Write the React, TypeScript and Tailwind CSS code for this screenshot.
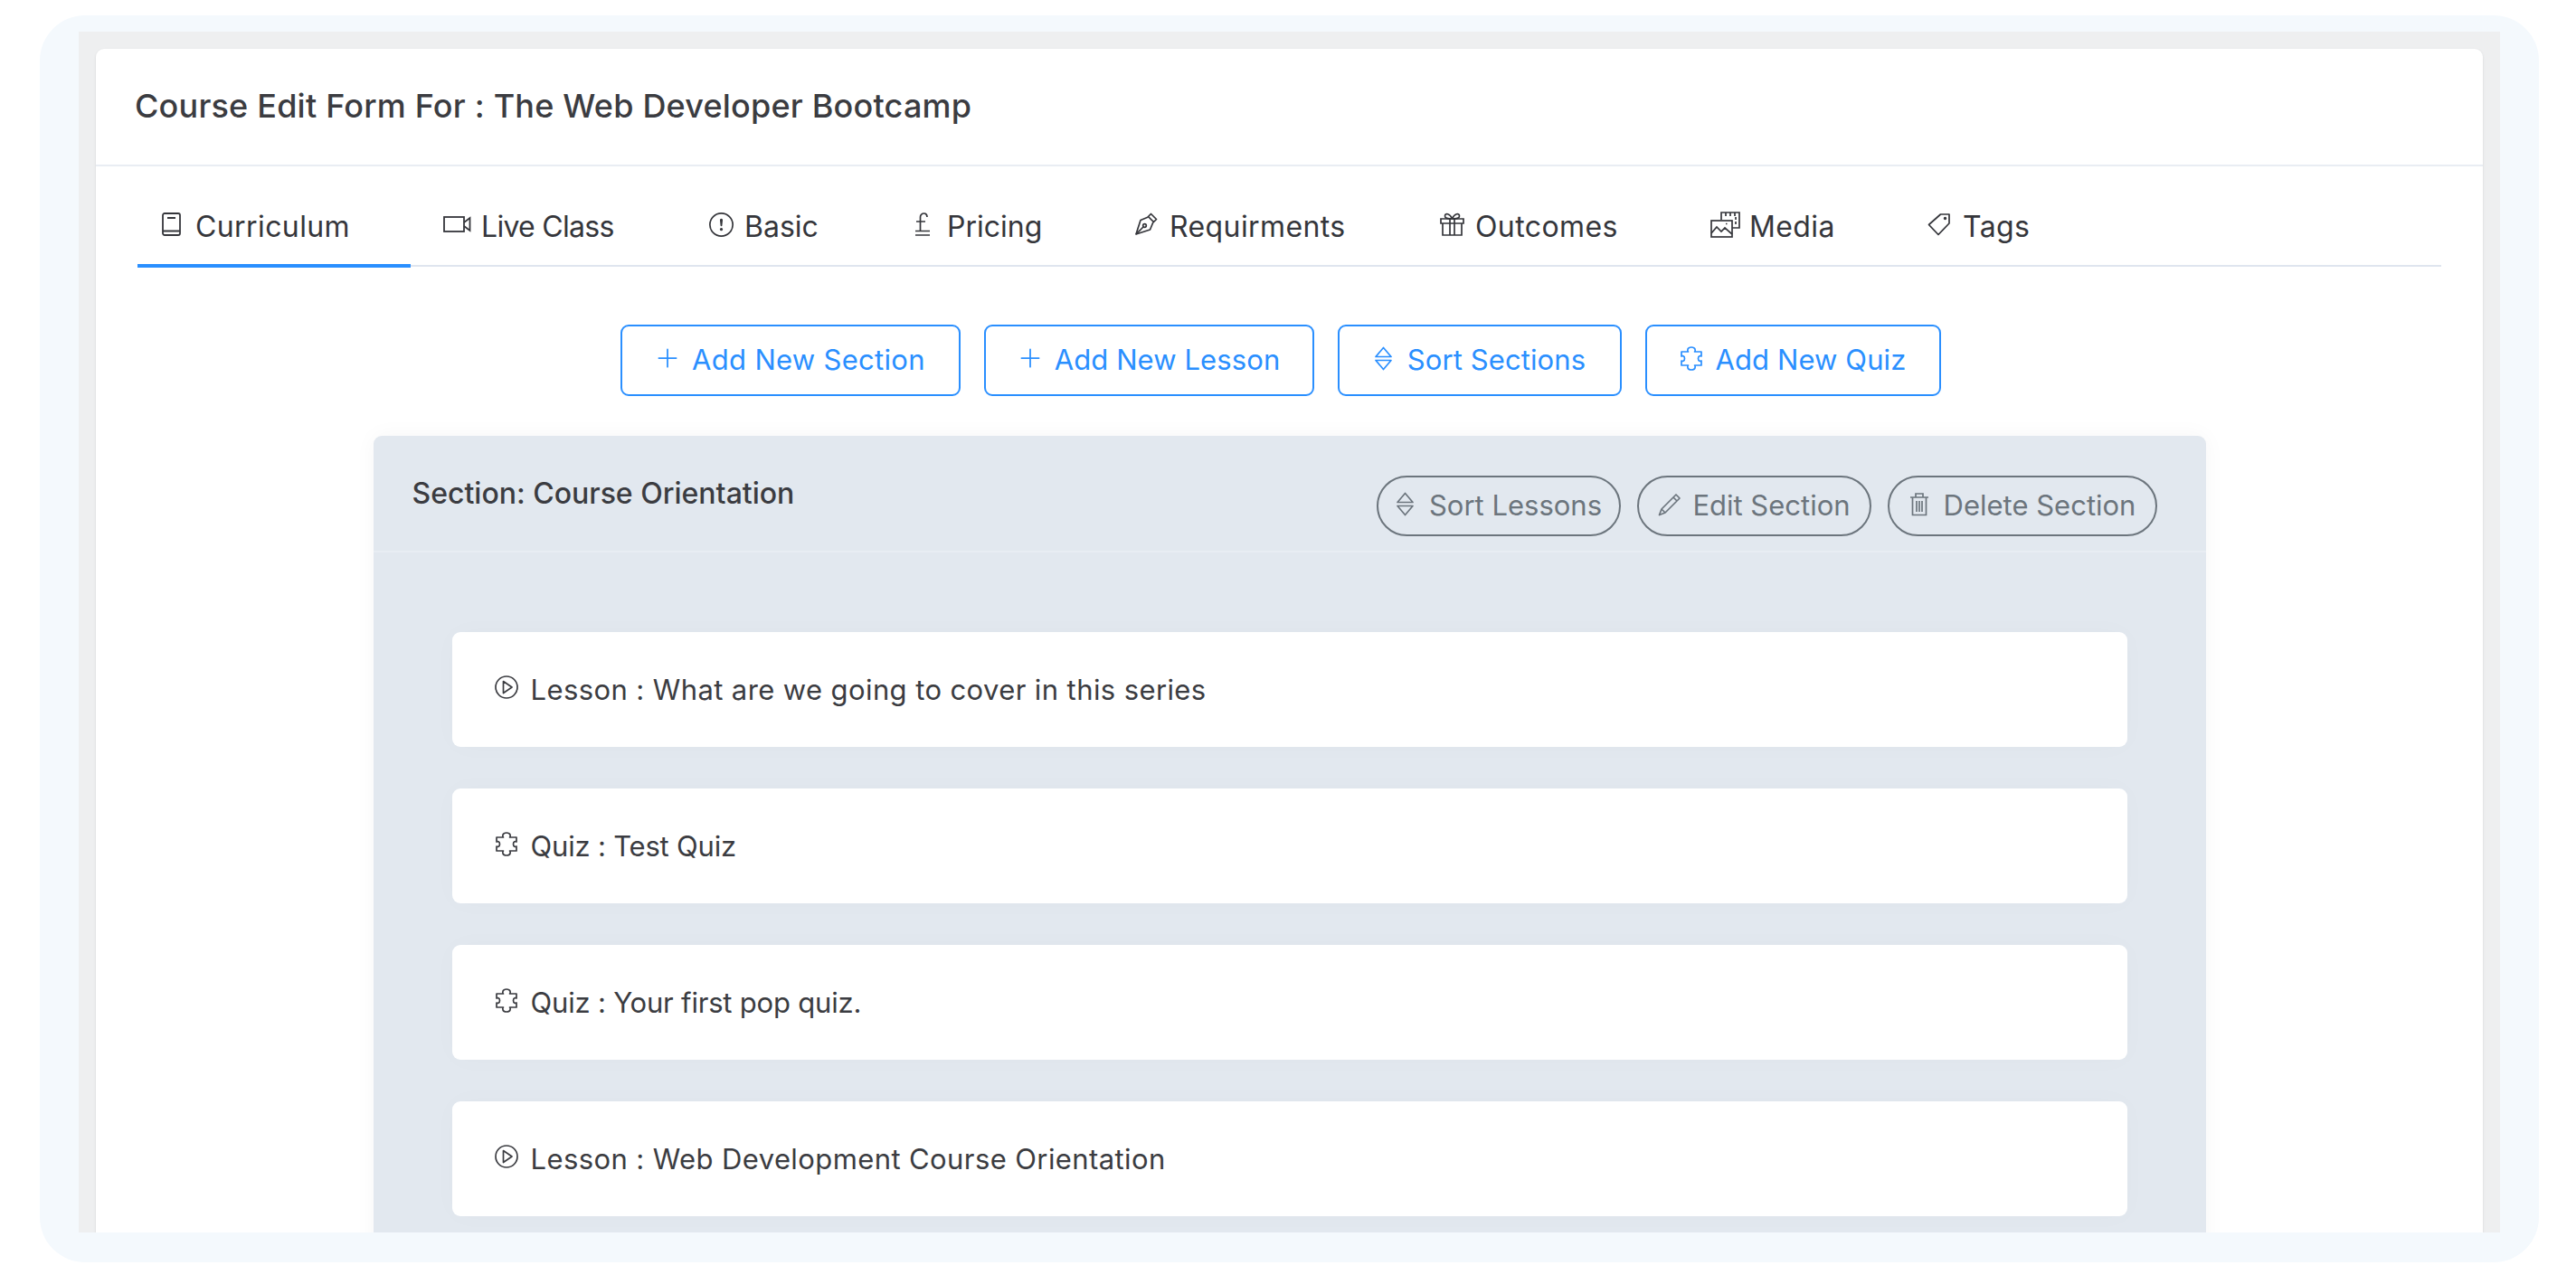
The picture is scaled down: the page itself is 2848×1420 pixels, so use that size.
import React from "react";
import { BsExclamationCircle, BsPlusLg } from "react-icons/bs";

type IconProps = { className?: string };

const BookIcon = ({ className }: IconProps) => (
  <svg viewBox="0 0 21 26" fill="none" stroke="currentColor" strokeWidth="1.8" className={className}>
    <rect x="1" y="1" width="19" height="24" rx="2" />
    <path d="M1 20.500h19M6 6h9" />
  </svg>
);

const VideoIcon = ({ className }: IconProps) => (
  <svg viewBox="0 0 31 18" fill="none" stroke="currentColor" strokeWidth="1.8" className={className}>
    <rect x="1" y="1" width="22" height="16" />
    <path d="M23 7l6.500-5v14L23 11" />
  </svg>
);

const PoundIcon = ({ className }: IconProps) => (
  <svg viewBox="0 0 18 26" fill="none" stroke="currentColor" strokeWidth="1.7" className={className}>
    <path d="M14 5c0-2.500-1.500-4-3.500-4S6.500 2.500 6.500 5v15.500M2 10h10M1 20.500h16M1 25h16" />
  </svg>
);

const SortIcon = ({ className }: IconProps) => (
  <svg viewBox="0 0 23 27" fill="none" stroke="currentColor" strokeWidth="1.7" className={className}>
    <path d="M11.500 1.500L20 11.500H3zM11.500 25.500L3 15.500h17z" strokeLinejoin="round" />
  </svg>
);

const PenIcon = ({ className }: IconProps) => (
  <svg viewBox="0 0 26 26" fill="none" stroke="currentColor" strokeWidth="1.7" strokeLinejoin="round" className={className}>
    <path d="M18.500 1.500l6 6-3 3-6-6z" />
    <path d="M15.500 5L7 8.500 2 24l15.500-5L21 10.500" />
    <path d="M2 24l8-8" />
    <circle cx="11.500" cy="14.500" r="1.800" />
  </svg>
);

const GiftIcon = ({ className }: IconProps) => (
  <svg viewBox="0 0 27 26" fill="none" stroke="currentColor" strokeWidth="1.7" className={className}>
    <path d="M1 7h25v5H1zM3 12h21v13H3zM11 7v18M16 7v18" />
    <path d="M13.500 7C11 1 5.500 0 5.500 4c0 2.500 3 3 8 3zM13.500 7C16 1 21.500 0 21.500 4c0 2.500-3 3-8 3z" />
  </svg>
);

const MediaIcon = ({ className }: IconProps) => (
  <svg viewBox="0 0 33 29" fill="none" stroke="currentColor" strokeWidth="1.7" className={className}>
    <path d="M12 9V1h20v17h-8M17 1v4M22 1v4M27 1v4M28 6v3M28 11v3" />
    <rect x="1" y="10" width="23" height="18" />
    <path d="M1 24l6-7 5 5 4-4 8 7M17 13.500h1.500" />
  </svg>
);

const TagIcon = ({ className }: IconProps) => (
  <svg viewBox="0 0 26 26" fill="none" stroke="currentColor" strokeWidth="1.7" strokeLinejoin="round" className={className}>
    <path d="M14.500 2H24v10L12 24.500 1.500 13.500z" />
    <circle cx="19.500" cy="6.500" r="0.900" />
  </svg>
);

const PuzzleIcon = ({ className }: IconProps) => (
  <svg viewBox="0 0 26 27" fill="none" stroke="currentColor" strokeWidth="1.7" strokeLinejoin="round" className={className}>
    <path d="M2 6h7.500c-1-1-1.500-5 3.500-5s4.500 4 3.500 5H24v5c-1-.8-3.500-.5-3.500 2.500s2.500 3.300 3.500 2.500v5h-7.500c1 1 1.500 5-3.500 5s-4.500-4-3.500-5H2v-5c1 .8 3.500.5 3.500-2.500S3 10.200 2 11z" />
  </svg>
);

const PlayCircleIcon = ({ className }: IconProps) => (
  <svg viewBox="0 0 26 26" fill="none" stroke="currentColor" strokeWidth="1.7" strokeLinejoin="round" className={className}>
    <circle cx="13" cy="13" r="12" />
    <path d="M9.500 6.500L19 13l-9.500 6.500z" />
  </svg>
);

const PencilIcon = ({ className }: IconProps) => (
  <svg viewBox="0 0 27 26" fill="none" stroke="currentColor" strokeWidth="1.7" strokeLinejoin="round" className={className}>
    <path d="M21 2l4 4L9 22l-6.500 2.500L5 18zM18 5l4 4M5 18l4 4" />
  </svg>
);

const TrashIcon = ({ className }: IconProps) => (
  <svg viewBox="0 0 24 27" fill="none" stroke="currentColor" strokeWidth="1.7" className={className}>
    <path d="M2 6h20M8 6V2h8v4M4.500 6v19.500h15V6M9 10v12M12 10v12M15 10v12" />
  </svg>
);

const tabs = [
  { label: "Curriculum", box: "w-[302px] gap-[16px]", text: "tracking-[0.4px]", icon: <BookIcon className="h-[26px] w-[21px]" /> },
  { label: "Live Class", box: "w-[285px] gap-[11px]", text: "tracking-[-0.7px]", icon: <VideoIcon className="h-[18px] w-[31px]" /> },
  { label: "Basic", box: "w-[218px] gap-[12px]", text: "tracking-[0px]", icon: <BsExclamationCircle className="text-[27px]" /> },
  { label: "Pricing", box: "w-[234px] gap-[18px]", text: "tracking-[0px]", icon: <PoundIcon className="h-[26px] w-[18px]" /> },
  { label: "Requirments", box: "w-[329px] gap-[13px]", text: "tracking-[0.4px]", icon: <PenIcon className="h-[26px] w-[26px]" /> },
  { label: "Outcomes", box: "w-[290px] gap-[12px]", text: "tracking-[0.4px]", icon: <GiftIcon className="h-[26px] w-[27px]" /> },
  { label: "Media", box: "w-[231px] gap-[10px]", text: "tracking-[0.4px]", icon: <MediaIcon className="h-[29px] w-[33px]" /> },
  { label: "Tags", box: "w-[170px] gap-[13px]", text: "tracking-[0.4px]", icon: <TagIcon className="h-[26px] w-[26px]" /> },
];

const topActions = [
  { label: "Add New Section", box: "w-[376px] gap-[13px] tracking-[0.3px]", icon: <BsPlusLg className="text-[28px] -mt-[5px]" /> },
  { label: "Add New Lesson", box: "w-[365px] gap-[13px] tracking-[0.1px]", icon: <BsPlusLg className="text-[28px] -mt-[5px]" /> },
  { label: "Sort Sections", box: "w-[314px] gap-[15px] tracking-[0.1px]", icon: <SortIcon className="h-[27px] w-[23px] -mt-[4px]" /> },
  { label: "Add New Quiz", box: "w-[327px] gap-[14px] tracking-[0.1px]", icon: <PuzzleIcon className="h-[27px] w-[26px] -mt-[4px]" /> },
];

const sectionActions = [
  { label: "Sort Lessons", box: "w-[270px] gap-[15px]", icon: <SortIcon className="h-[27px] w-[23px] -mt-[4px]" /> },
  { label: "Edit Section", box: "w-[259px] gap-[12px]", icon: <PencilIcon className="h-[26px] w-[27px] -mt-[4px]" /> },
  { label: "Delete Section", box: "w-[298px] gap-[15px]", icon: <TrashIcon className="h-[27px] w-[24px] -mt-[4px]" /> },
];

const rows = [
  { type: "lesson", text: "Lesson : What are we going to cover in this series" },
  { type: "quiz", text: "Quiz : Test Quiz" },
  { type: "quiz", text: "Quiz : Your first pop quiz." },
  { type: "lesson", text: "Lesson : Web Development Course Orientation" },
];

export default function App() {
  return (
    <div className="h-[1420px] overflow-hidden bg-white pt-[17px] pb-[24px] pl-[44px] pr-[41px] font-['Inter',sans-serif]">
      <div className="h-full rounded-[50px] bg-[#f4f9fd] pt-[18px] pb-[33px] px-[43px]">
        <div className="h-full overflow-hidden bg-[#eeeff0] pt-[19px] px-[19px]">
          <div className="h-[1400px] rounded-t-[9px] bg-white shadow-sm">
            <div className="h-[130px] border-b-2 border-[#e9edf3] pl-[43px] pt-[40px]">
              <h1 className="text-[36px] leading-[46px] font-medium tracking-[0.2px] text-[#3b3c41]">
                Course Edit Form For : The Web Developer Bootcamp
              </h1>
            </div>

            <div className="px-[46px]">
              <div className="flex h-[111px] gap-[9px] border-b-2 border-[#dfe5ef] pt-[44px]">
                {tabs.map((tab, i) => (
                  <div
                    key={tab.label}
                    className={
                      (i === 0 ? "border-b-4 border-[#2a8fff] " : "") +
                      "flex h-[68px] items-start pl-[27px] text-[#35363b] " +
                      tab.box
                    }
                  >
                    <span className="flex h-[40px] items-center">{tab.icon}</span>
                    <span className={"text-[32px] leading-[46px] " + tab.text}>{tab.label}</span>
                  </div>
                ))}
              </div>

              <div className="mt-[64px] flex justify-center gap-[26px] pr-[20px]">
                {topActions.map((a) => (
                  <button
                    key={a.label}
                    className={
                      "flex h-[79px] items-center justify-center rounded-[9px] border-2 border-[#2a8fff] bg-white text-[31px] text-[#2a8fff] " +
                      a.box
                    }
                  >
                    {a.icon}
                    <span>{a.label}</span>
                  </button>
                ))}
              </div>

              <div className="mx-auto mt-[44px] w-[2026px] rounded-t-[9px] bg-[#e2e8ef] pb-[120px] shadow-[0_0_24px_rgba(0,0,0,0.04)]">
                <div className="flex h-[129px] justify-between border-b-2 border-[#e8edf3] pl-[43px] pr-[54px]">
                  <div className="pt-[41px] text-[32px] leading-[46px] font-medium text-[#3b3c41]">
                    Section: Course Orientation
                  </div>
                  <div className="flex gap-[18px] pt-[44px]">
                    {sectionActions.map((a) => (
                      <button
                        key={a.label}
                        className={
                          "flex h-[67px] items-center justify-center rounded-full border-2 border-[#6c757d] text-[31px] text-[#6c757d] " +
                          a.box
                        }
                      >
                        {a.icon}
                        <span>{a.label}</span>
                      </button>
                    ))}
                  </div>
                </div>

                <div className="flex flex-col gap-[46px] px-[87px] pt-[88px]">
                  {rows.map((row) => (
                    <div
                      key={row.text}
                      className="flex h-[127px] items-center gap-[14px] rounded-[9px] bg-white pl-[47px] text-[#3b3c41] shadow-[0_0_30px_rgba(0,0,0,0.02)]"
                    >
                      {row.type === "lesson" ? (
                        <PlayCircleIcon className="h-[26px] w-[26px] -mt-[5px]" />
                      ) : (
                        <PuzzleIcon className="h-[27px] w-[26px] -mt-[5px]" />
                      )}
                      <span
                        className={
                          row.type === "lesson"
                            ? "text-[31px] leading-[46px] tracking-[0.4px]"
                            : "text-[31px] leading-[46px] tracking-[-0.2px]"
                        }
                      >
                        {row.text}
                      </span>
                    </div>
                  ))}
                </div>
              </div>
            </div>
          </div>
        </div>
      </div>
    </div>
  );
}
